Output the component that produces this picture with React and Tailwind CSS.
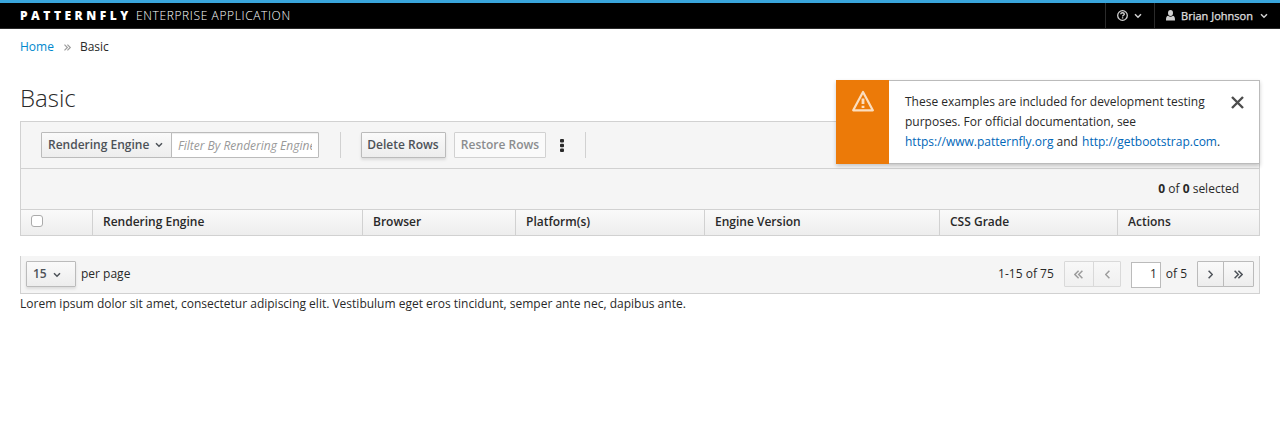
const stroke = { fill: 'none', stroke: 'currentColor' };

function Caret({ className = '', d = 'M1 1.2 4 4.2 7 1.2' }) {
  return (
    <svg className={`h-[6px] w-2 ${className}`} viewBox="0 0 8 6" {...stroke} strokeWidth="1.5">
      <path d={d} />
    </svg>
  );
}

function Angle({ left, double, className = 'h-[9px]' }) {
  return (
    <svg
      className={`${double ? 'w-[9px]' : 'w-[5px]'} ${left ? 'rotate-180' : ''} ${className}`}
      viewBox={double ? '0 0 9 9' : '0 0 5 9'}
      {...stroke}
      strokeWidth="1.5"
    >
      <path d="M.6 .8 4.3 4.5 .6 8.2" />
      {double && <path d="M4.4 .8 8.1 4.5 4.4 8.2" />}
    </svg>
  );
}

const columns = [
  ['Rendering Engine', 'w-[270px]'],
  ['Browser', 'w-[153px]'],
  ['Platform(s)', 'w-[189px]'],
  ['Engine Version', 'w-[235px]'],
  ['CSS Grade', 'w-[178px]'],
];

function Header() {
  return (
    <header className="flex h-[29px] items-stretch border-t-[3px] border-b border-t-[#39a5dc] border-b-[#292929] bg-black pl-5 text-white">
      <div className="flex items-center whitespace-pre leading-[25px]">
        <span className="w-[116px] text-[12px] font-extrabold tracking-[3.5px]">PATTERNFLY</span>
        <span className="text-[12px] font-light tracking-[0.62px]">ENTERPRISE APPLICATION</span>
      </div>
      <nav className="ml-auto flex text-[#d1d1d1]">
        <button className="flex w-[49px] items-center border-l border-[#2b2b2b] pl-[11px]">
          <svg className="h-[11px] w-[11px]" viewBox="0 0 11 11" {...stroke} strokeWidth="1.3">
            <circle cx="5.5" cy="5.5" r="4.8" />
            <path d="M3.7 4.3c.1-1.1.9-1.5 1.8-1.5 1 0 1.8.5 1.8 1.4C7.3 5.3 5.6 5.3 5.6 6.5M5.6 7.3v1.2" strokeWidth="1.4" />
          </svg>
          <Caret className="ml-[6px]" />
        </button>
        <button className="flex w-[126px] items-center border-l border-[#2b2b2b] pl-[11px]">
          <svg className="h-[11px] w-[9px]" viewBox="0 0 9 11" fill="currentColor">
            <ellipse cx="4.5" cy="3" rx="2.5" ry="3" />
            <path d="M2 5.7Q4.5 7.6 7 5.7C8.7 6.2 9 7.5 9 10.5H0C0 7.5 .3 6.2 2 5.7Z" />
          </svg>
          <span className="ml-[6px] w-[72px] text-[11px] font-medium whitespace-nowrap text-[#e0e0e0] [-webkit-text-stroke:0.25px]">Brian Johnson</span>
          <Caret className="ml-[7px]" />
        </button>
      </nav>
    </header>
  );
}

function Toast() {
  return (
    <div className="absolute top-20 right-5 flex h-[84px] w-[424px] border border-[#bbb] bg-white shadow-[0_2px_4px_rgba(3,3,3,0.2)]">
      <div className="-my-px -ml-px flex w-[53px] shrink-0 justify-center bg-[#ec7a08] pt-[10px]">
        <svg className="h-[22px] w-[22px] text-[#fbdebf]" viewBox="0 0 22 22" {...stroke} strokeWidth="2.2" strokeLinejoin="round">
          <path d="M11 2 20.8 20.3H1.2Z" />
          <path d="M11 8.5v5.5M11 15.7v2.3" strokeWidth="2.8" />
        </svg>
      </div>
      <p className="pt-[11px] pl-4 leading-5 whitespace-nowrap">
        These examples are included for development testing<br />
        purposes. For official documentation, see<br />
        <a className="text-[#0066b8]" href="#pf">https://www.patternfly.org</a> and{' '}
        <a className="ml-px text-[#0066b8]" href="#bs">http://getbootstrap.com</a>.
      </p>
      <button className="ml-auto mt-[15px] mr-[15px] h-[13px] w-[13px] text-[#4d4d4d]" aria-label="Close">
        <svg className="block h-[13px] w-[13px]" viewBox="0 0 13 13" {...stroke} strokeWidth="2.4">
          <path d="M1 1 12 12M12 1 1 12" />
        </svg>
      </button>
    </div>
  );
}

const buttonFace = 'border border-[#bbb] bg-linear-to-b from-[#fafafa] to-[#ededed] font-semibold text-[#4d5258]';

function Toolbar() {
  return (
    <div className="flex h-[46px] items-center pl-5">
      <button className={`flex h-[26px] w-[131px] items-center rounded-l-[1px] pl-[6px] ${buttonFace}`}>
        Rendering Engine
        <Caret className="ml-[6px]" />
      </button>
      <input
        className="-ml-px h-[26px] w-[148px] rounded-r-[1px] border border-[#bbb] bg-white pt-px pr-[6px] pl-[6px] italic shadow-[inset_0_1px_1px_rgba(3,3,3,0.075)] placeholder:text-[#999]"
        placeholder="Filter By Rendering Engine..."
      />
      <span className="ml-[21px] h-[26px] border-l border-[#d1d1d1]" />
      <button className={`ml-5 h-[26px] w-[85px] rounded-[1px] pr-px shadow-[0_2px_3px_rgba(3,3,3,0.1)] ${buttonFace}`}>Delete Rows</button>
      <button className="ml-2 h-[26px] w-[92px] rounded-[1px] border border-[#d1d1d1] bg-[#fafafa] font-semibold text-[#8b8d8f]">Restore Rows</button>
      <svg className="ml-[14px] h-[13px] w-1" viewBox="0 0 4 13" fill="#292929">
        <rect width="4" height="3.6" rx="1" />
        <rect y="4.7" width="4" height="3.6" rx="1" />
        <rect y="9.4" width="4" height="3.6" rx="1" />
      </svg>
      <span className="ml-[21px] h-[26px] border-l border-[#d1d1d1]" />
    </div>
  );
}

function Pagination() {
  return (
    <div className="mt-5 flex h-[38px] items-start border-x border-b border-[#d1d1d1] bg-[#f5f5f5] pt-[5px] pl-[5px] pr-[5px]">
      <button className={`flex h-[26px] w-[50px] items-center rounded-[1px] pl-[6px] shadow-[0_2px_3px_rgba(3,3,3,0.1)] ${buttonFace}`}>
        15
        <Caret className="mt-px ml-[6px]" />
      </button>
      <span className="ml-[5px] leading-[25px]">per page</span>
      <span className="ml-auto leading-[25px]">1-15 of 75</span>
      <div className="ml-[10px] flex text-[#9c9c9c]">
        <button className="flex h-[26px] w-[30px] items-center justify-center rounded-l-[1px] border border-[#d9d9d9] bg-linear-to-b from-[#f8f8f8] to-[#f0f0f0]">
          <Angle left double />
        </button>
        <button className="-ml-px flex h-[26px] w-7 items-center justify-center rounded-r-[1px] border border-[#d9d9d9] bg-linear-to-b from-[#f8f8f8] to-[#f0f0f0] pl-px">
          <Angle left />
        </button>
      </div>
      <input className="mt-px ml-[10px] h-[26px] w-[30px] border border-[#bbb] bg-white pr-[3px] pb-[3px] text-right" defaultValue="1" />
      <span className="ml-[5px] leading-[25px]">of 5</span>
      <div className="ml-[10px] flex">
        <button className={`flex h-[26px] w-[27px] items-center justify-center rounded-l-[1px] ${buttonFace}`}>
          <Angle />
        </button>
        <button className={`-ml-px flex h-[26px] w-[31px] items-center justify-center rounded-r-[1px] ${buttonFace}`}>
          <Angle double />
        </button>
      </div>
    </div>
  );
}

export default function App() {
  return (
    <div className="relative h-[424px] overflow-hidden bg-white font-['Open_Sans',sans-serif] text-[12px] leading-5 text-[#292929]">
      <Header />
      <main className="px-5">
        <div className="flex h-[35px] items-center">
          <a className="text-[#0088ce]" href="#home">Home</a>
          <Angle double className="mt-0.5 ml-[9px] h-[7px] text-[#9c9c9c]" />
          <span className="ml-[8px]">Basic</span>
        </div>
        <h1 className="mt-[21px] h-9 text-[24px] leading-[26px] font-light">Basic</h1>
        <section className="border border-b-0 border-[#d1d1d1] bg-[#f5f5f5]">
          <Toolbar />
          <div className="flex h-[41px] items-center justify-end border-t border-[#d1d1d1] pr-5">
            <span><b>0</b> of <b>0</b> selected</span>
          </div>
        </section>
        <div className="flex h-[27px] border border-[#d1d1d1] bg-linear-to-b from-[#fafafa] to-[#ededed] font-semibold leading-[23px]">
          <div className="w-[72px] border-r border-[#d1d1d1] pt-[5px] pl-[10px]">
            <input type="checkbox" className="block h-3 w-3 appearance-none rounded-[3px] border border-[#ababab] bg-white" />
          </div>
          {columns.map(([name, width]) => (
            <div key={name} className={`border-r border-[#d1d1d1] pl-[10px] ${width}`}>{name}</div>
          ))}
          <div className="pl-[10px]">Actions</div>
        </div>
        <Pagination />
        <p>Lorem ipsum dolor sit amet, consectetur adipiscing elit. Vestibulum eget eros tincidunt, semper ante nec, dapibus ante.</p>
      </main>
      <Toast />
    </div>
  );
}
